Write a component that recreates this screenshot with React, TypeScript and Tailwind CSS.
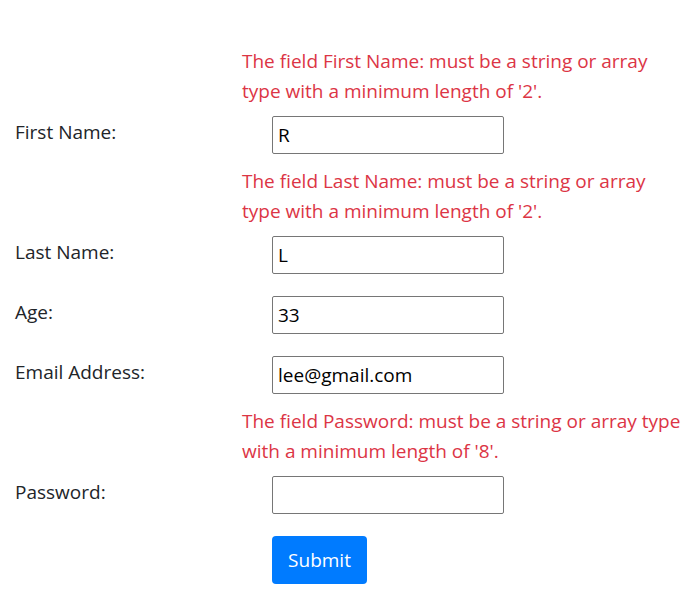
import React from "react";

type Field = {
  label: string;
  value: string;
  type?: string;
  error?: [string, string];
};

const fields: Field[] = [
  {
    label: "First Name:",
    value: "R",
    error: ["The field First Name: must be a string or array", "type with a minimum length of '2'."],
  },
  {
    label: "Last Name:",
    value: "L",
    error: ["The field Last Name: must be a string or array", "type with a minimum length of '2'."],
  },
  { label: "Age:", value: "33" },
  { label: "Email Address:", value: "lee@gmail.com" },
  {
    label: "Password:",
    value: "",
    type: "password",
    error: ["The field Password: must be a string or array type", "with a minimum length of '8'."],
  },
];

function FormRow({ field }: { field: Field }) {
  return (
    <div className="flex flex-col">
      {field.error && (
        <div className="ml-[227px] mb-[10px] -mt-[10px] text-[#dc3545] leading-[30px] whitespace-nowrap">
          <div>{field.error[0]}</div>
          <div>{field.error[1]}</div>
        </div>
      )}
      <div className="flex items-center h-[38px]">
        <label className="w-[257px] text-[#212529] -mt-[6px]">{field.label}</label>
        <input
          type={field.type ?? "text"}
          defaultValue={field.value}
          className="w-[232px] h-[38px] border border-[#767676] rounded-[2px] px-[5px] text-black bg-white outline-none"
        />
      </div>
    </div>
  );
}

export default function App() {
  return (
    <div className="bg-white min-h-[602px] pt-[56px] pl-[15px] text-[19px] font-['Open_Sans',sans-serif]">
      <div className="flex flex-col gap-[22px]">
        {fields.map((f) => (
          <FormRow key={f.label} field={f} />
        ))}
        <div className="ml-[257px]">
          <button className="w-[95px] h-[48px] bg-[#007bff] text-white rounded-[4px] text-[19px]">
            Submit
          </button>
        </div>
      </div>
    </div>
  );
}
